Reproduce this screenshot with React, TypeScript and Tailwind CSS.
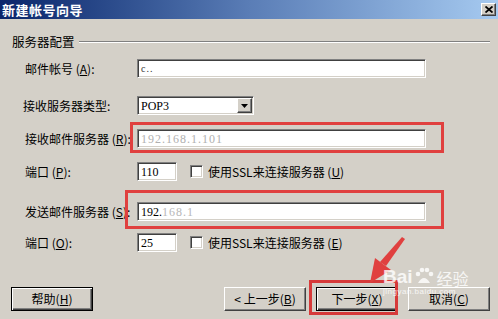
const sunken =
  "bg-white border border-t-[#808080] border-l-[#808080] border-r-white border-b-white shadow-[inset_1px_1px_0_#404040,inset_-1px_-1px_0_#d4d0c8]";
const raised =
  "bg-[#d4d0c8] border border-t-white border-l-white border-r-[#404040] border-b-[#404040] shadow-[inset_-1px_-1px_0_#808080]";
const framed =
  "bg-[#d4d0c8] border border-black shadow-[inset_1px_1px_0_#fff,inset_-1px_-1px_0_#404040,inset_-2px_-2px_0_#808080]";

function Key({ k }: { k: string }) {
  return (
    <span>
      {" "}(<span className="underline">{k}</span>)
    </span>
  );
}

function Row({ label, k, className, children }: {
  label: string; k?: string; className: string; children: React.ReactNode;
}) {
  return (
    <div className={`flex items-center h-[19px] ${className}`}>
      <div className="w-[112px] shrink-0 whitespace-nowrap">
        {label}{k && <Key k={k} />}:
      </div>
      {children}
    </div>
  );
}

function Check({ k }: { k: string }) {
  return (
    <div className="flex items-center ml-[13px] gap-[5px]">
      <div className={`w-[13px] h-[13px] ${sunken}`} />
      <span className="whitespace-nowrap">使用SSL来连接服务器<Key k={k} /></span>
    </div>
  );
}

function Input({ w, children }: { w: string; children?: React.ReactNode }) {
  return (
    <div className={`${w} h-full ${sunken} flex items-center px-[3px] font-['Liberation_Serif',serif] text-[12px] text-black`}>
      {children}
    </div>
  );
}

function Btn({ kind, children }: { kind: string; children: React.ReactNode }) {
  return (
    <div className={`w-[82px] h-[24px] flex items-center justify-center whitespace-nowrap ${kind}`}>
      {children}
    </div>
  );
}

export default function App() {
  return (
    <div className="relative w-[498px] h-[319px] overflow-hidden bg-[#d4d0c8] text-[12px] leading-none text-black font-['Noto_Sans_CJK_SC',sans-serif] flex flex-col">
      {/* Title bar */}
      <div className="h-[19px] shrink-0 flex items-center justify-between pl-[2px] pr-[2px] bg-gradient-to-r from-[#0a246a] via-[#5a7db6] to-[#a6caf0]">
        <span className="text-white font-bold text-[13px] tracking-[0.5px]">新建帐号向导</span>
        <div className={`w-[15px] h-[13px] flex items-center justify-center ${raised}`}>
          <svg width="8" height="7" viewBox="0 0 8 7">
            <path d="M0.5 0.5 L7.5 6.5 M7.5 0.5 L0.5 6.5" stroke="#000" strokeWidth="1.8" />
          </svg>
        </div>
      </div>

      {/* Group header */}
      <div className="mt-[16px] h-[14px] flex items-center pl-[12px] pr-[8px] gap-[4px]">
        <span className="whitespace-nowrap text-[12.5px]">服务器配置</span>
        <div className="flex-1 h-[2px] border-t border-t-[#808080] border-b border-b-white" />
      </div>

      <div className="pl-[25px] flex flex-col">
        <Row label="邮件帐号" k="A" className="mt-[10px]">
          <Input w="w-[289px]"><span className="text-[10px] text-[#333] tracking-[1px]">c..</span></Input>
        </Row>
        <Row label="接收服务器类型" className="mt-[18px] -ml-[2px]">
          <div className="w-[2px]" />
          <div className={`w-[117px] h-full ${sunken} flex items-center justify-between pl-[3px] pr-[1px] font-['Liberation_Serif',serif]`}>
            <span>POP3</span>
            <div className={`w-[15px] h-[15px] flex items-center justify-center ${raised}`}>
              <svg width="7" height="4" viewBox="0 0 7 4"><path d="M0 0 H7 L3.5 4 Z" fill="#000" /></svg>
            </div>
          </div>
        </Row>
        <Row label="接收邮件服务器" k="R" className="mt-[14px]">
          <Input w="w-[289px]"><span className="text-[#b0b0b0] tracking-[1px]">192.168.1.101</span></Input>
        </Row>
        <Row label="端口" k="P" className="mt-[14px]">
          <Input w="w-[40px]">110</Input>
          <Check k="U" />
        </Row>
        <Row label="发送邮件服务器" k="S" className="mt-[21px]">
          <Input w="w-[289px]">192.<span className="text-[#b8b8b8] tracking-[1px]">168.1</span></Input>
        </Row>
        <Row label="端口" k="O" className="mt-[12px]">
          <Input w="w-[40px]">25</Input>
          <Check k="E" />
        </Row>
      </div>

      {/* Buttons */}
      <div className="mt-[35px] flex items-center pl-[11px] pr-[8px]">
        <Btn kind={framed}>帮助<Key k="H" /></Btn>
        <div className="flex-1" />
        <div className="flex gap-[10px]">
          <Btn kind={raised}>&lt; 上一步 <Key k="B" /></Btn>
          <Btn kind={framed}>下一步<Key k="X" /></Btn>
          <Btn kind={raised}>取消<Key k="C" /></Btn>
        </div>
      </div>

      {/* Annotation boxes */}
      <div className="absolute left-[130px] top-[122px] w-[314px] h-[31px] border-[3px] border-[#e0403f]" />
      <div className="absolute left-[125px] top-[190px] w-[319px] h-[39px] border-[3px] border-[#e0403f]" />
      <div className="absolute left-[309px] top-[280px] w-[89px] h-[35px] border-[3px] border-[#d63a3a]" />

      {/* Arrow */}
      <svg className="absolute left-[360px] top-[230px]" width="50" height="56" viewBox="0 0 50 56">
        <polygon points="42,7 45,9 26,36 20,32" fill="#e0403f" />
        <polygon points="10,53 31,40 15,28" fill="#e0403f" />
      </svg>

      {/* Watermark */}
      <div className="absolute left-[383px] top-[266px] flex flex-col items-start text-white/80 pointer-events-none">
        <div className="flex items-end leading-none">
          <span className="font-['Liberation_Sans',sans-serif] font-bold text-[19px]">Bai</span>
          <svg width="20" height="20" viewBox="0 0 20 20" className="mx-[1px]">
            <circle cx="4" cy="8" r="2.3" fill="#fff" fillOpacity="0.8" />
            <circle cx="8" cy="4" r="2.3" fill="#fff" fillOpacity="0.8" />
            <circle cx="13" cy="4" r="2.3" fill="#fff" fillOpacity="0.8" />
            <circle cx="17" cy="8" r="2.3" fill="#fff" fillOpacity="0.8" />
            <path d="M4 17 Q10 7 16 17 Z" fill="#fff" fillOpacity="0.8" />
          </svg>
          <span className="text-[16px] ml-[2px]">经验</span>
        </div>
        <span className="font-['Liberation_Sans',sans-serif] text-[8px] mt-[2px] tracking-[0.5px]">jingyan.baidu.com</span>
      </div>
    </div>
  );
}
